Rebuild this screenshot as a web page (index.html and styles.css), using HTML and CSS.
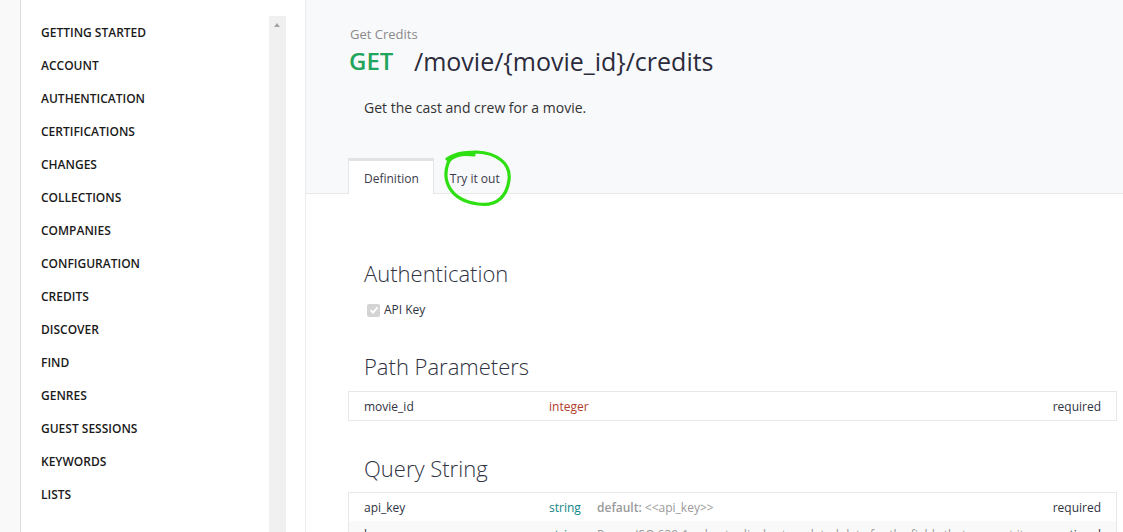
FILE: index.html
```html
<!DOCTYPE html>
<html>
<head>
<meta charset="utf-8">
<link rel="stylesheet" href="styles.css">
</head>
<body>
<div class="page">
  <aside class="sidebar">
    <ul class="nav">
      <li>GETTING STARTED</li>
      <li>ACCOUNT</li>
      <li>AUTHENTICATION</li>
      <li>CERTIFICATIONS</li>
      <li>CHANGES</li>
      <li>COLLECTIONS</li>
      <li>COMPANIES</li>
      <li>CONFIGURATION</li>
      <li>CREDITS</li>
      <li>DISCOVER</li>
      <li>FIND</li>
      <li>GENRES</li>
      <li>GUEST SESSIONS</li>
      <li>KEYWORDS</li>
      <li>LISTS</li>
    </ul>
    <div class="scrollbar"><span class="arrow"></span></div>
  </aside>
  <main class="main">
    <header class="header">
      <div class="subtitle">Get Credits</div>
      <h1 class="title"><span class="method">GET</span><span class="path">/movie/{movie_id}/credits</span></h1>
      <p class="desc">Get the cast and crew for a movie.</p>
      <div class="tabs">
        <div class="tab active">Definition</div>
        <div class="tab">Try it out</div>
        <svg class="annot" width="80" height="64" viewBox="440 148 80 64">
          <path d="M476 155 C463 153 453 156 450 163 C444 180 451 200 480 204 C500 207 509 195 511 180 C513 164 500 153 478 152 C465 152 455 154 449 159" fill="none" stroke="#2ee012" stroke-width="3.2" stroke-linecap="round"/>
        </svg>
      </div>
    </header>
    <section class="body">
      <h2 class="heading">Authentication</h2>
      <label class="check"><span class="box"><svg width="10" height="10" viewBox="0 0 10 10"><path d="M1.5 5.2 L4 7.6 L8.6 2.4" fill="none" stroke="#fff" stroke-width="1.8"/></svg></span>API Key</label>

      <h2 class="heading h-path">Path Parameters</h2>
      <div class="table">
        <div class="row">
          <span class="name">movie_id</span>
          <span class="type int">integer</span>
          <span class="info"></span>
          <span class="req">required</span>
        </div>
      </div>

      <h2 class="heading h-query">Query String</h2>
      <div class="table table-query">
        <div class="row">
          <span class="name">api_key</span>
          <span class="type str">string</span>
          <span class="info"><b>default:</b> &lt;&lt;api_key&gt;&gt;</span>
          <span class="req">required</span>
        </div>
        <div class="row alt">
          <span class="name">language</span>
          <span class="type str">string</span>
          <span class="info">Pass a ISO 639-1 value to display translated data for the fields that support it.</span>
          <span class="req">optional</span>
        </div>
      </div>
    </section>
  </main>
</div>
</body>
</html>
```

FILE: styles.css
```css
* { box-sizing: border-box; }
html, body { margin: 0; padding: 0; }
body {
  background: #f9f9f9;
  font-family: "Open Sans", "Noto Sans", sans-serif;
  color: #333;
  overflow: hidden;
}
.page {
  display: flex;
  height: 532px;
  padding-left: 20px;
}
.sidebar {
  width: 286px;
  flex: none;
  background: #fff;
  border-left: 1px solid #dcdcdc;
  border-right: 1px solid #ececec;
  display: flex;
  padding-right: 19px;
}
.nav {
  list-style: none;
  margin: 0;
  padding: 24px 0 0 20px;
  flex: 1;
}
.nav li {
  font-size: 12px;
  font-weight: 600;
  line-height: 18px;
  height: 33px;
  color: #1a1a1a;
}
.scrollbar {
  width: 17px;
  margin-top: 16px;
  background: #f0f0f0;
  position: relative;
}
.arrow {
  position: absolute;
  left: 5px;
  top: 7px;
  width: 0; height: 0;
  border-left: 3.5px solid transparent;
  border-right: 3.5px solid transparent;
  border-bottom: 4px solid #a3a3a3;
}
.main {
  flex: 1;
  background: #fff;
  min-width: 0;
}
.header {
  background: #f8f9fb;
  padding: 25px 0 0 42px;
  border-bottom: 1px solid #e8e8e8;
}
.subtitle {
  font-size: 13px;
  line-height: 18px;
  color: #8a8a8a;
  padding-left: 2px;
}
.title {
  margin: 2px 0 0;
  font-size: 25px;
  line-height: 32px;
  font-weight: 400;
  display: flex;
}
.method {
  color: #21a45b;
  font-weight: 600;
  font-size: 24px;
  width: 66px;
  padding-left: 1px;
}
.path { color: #2b2b3b; }
.desc {
  margin: 21px 0 0;
  padding-left: 16px;
  font-size: 14px;
  line-height: 20px;
  color: #333;
}
.tabs {
  margin-top: 40px;
  display: flex;
  position: relative;
}
.tab {
  font-size: 12px;
  line-height: 35px;
  height: 36px;
  padding: 0 14px 0 15px;
  color: #3a3a4a;
  border-top: 3px solid transparent;
  border-left: 1px solid transparent;
  border-right: 1px solid transparent;
  margin-bottom: -1px;
}
.tab.active {
  background: #fff;
  border-top-color: #e2e2e2;
  border-left-color: #e6e6e6;
  border-right-color: #e6e6e6;
}
.annot {
  position: absolute;
  left: 90px;
  top: -10px;
}
.body {
  padding: 64px 6px 0 42px;
}
.heading {
  margin: 0;
  padding-left: 16px;
  font-size: 22px;
  line-height: 30px;
  font-weight: 300;
  color: #2f3342;
}
.check {
  display: flex;
  align-items: center;
  padding-left: 19px;
  margin-top: 13px;
  font-size: 12px;
  line-height: 18px;
  color: #2f3342;
}
.box {
  width: 13px; height: 13px;
  background: #d4d4d4;
  border-radius: 2px;
  margin-right: 4px;
  display: flex;
  align-items: center;
  justify-content: center;
}
.h-path { margin-top: 32px; }
.h-query { margin-top: 32px; }
.table {
  margin-top: 10px;
  border: 1px solid #e8e8e8;
}
.table-query { margin-top: 9px; }
.row {
  display: grid;
  grid-template-columns: 185px 48px 1fr auto;
  padding: 0 15px;
  height: 28px;
  align-items: center;
  font-size: 12px;
}
.row.alt {
  background: #f9f9f9;
  align-items: start;
  padding-top: 5px;
  height: 40px;
}
.name { color: #2f3342; }
.type.int { color: #b03c2c; }
.type.str { color: #138686; }
.info { color: #9a9a9a; white-space: nowrap; overflow: hidden; }
.info b { font-weight: 600; }
.req { color: #2f3342; text-align: right; }
```
